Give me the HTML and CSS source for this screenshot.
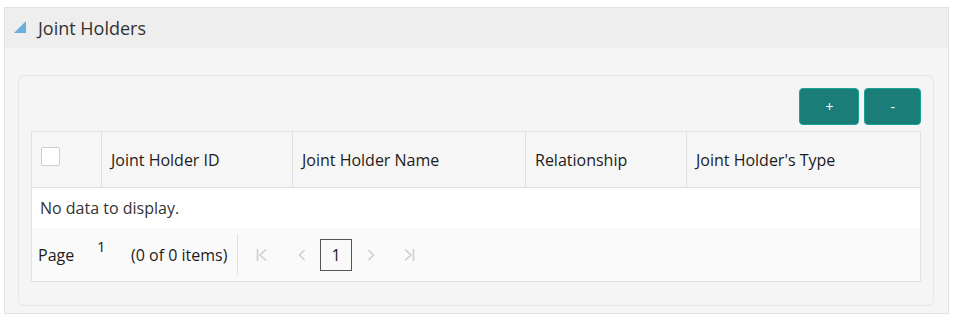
FILE: index.html
```html
<!DOCTYPE html>
<html>
<head>
<meta charset="utf-8">
<link rel="stylesheet" href="styles.css">
</head>
<body>
<section class="panel">
  <header class="panel-header">
    <svg class="tri" width="12" height="12" viewBox="0 0 12 12"><polygon points="12,0 12,12 0,12" fill="#6aaee0"/></svg>
    <span class="title">Joint Holders</span>
  </header>
  <div class="panel-body">
    <div class="card">
      <div class="toolbar">
        <button class="btn">+</button>
        <button class="btn">-</button>
      </div>
      <div class="grid">
        <div class="row head">
          <div class="cell c1"><span class="check"></span></div>
          <div class="cell c2">Joint Holder ID</div>
          <div class="cell c3">Joint Holder Name</div>
          <div class="cell c4">Relationship</div>
          <div class="cell c5">Joint Holder's Type</div>
        </div>
        <div class="empty">No data to display.</div>
        <div class="pager">
          <span class="plabel">Page</span>
          <span class="pinput">1</span>
          <span class="pcount">(0 of 0 items)</span>
          <span class="sep"></span>
          <span class="nav first"><svg width="12" height="14" viewBox="0 0 12 14"><path d="M1.5 1v12M10 1.5L4 7l6 5.5" fill="none" stroke="#cfcfcf" stroke-width="1.6"/></svg></span>
          <span class="nav prev"><svg width="8" height="14" viewBox="0 0 8 14"><path d="M6.5 2L1.5 7l5 5" fill="none" stroke="#cfcfcf" stroke-width="1.6"/></svg></span>
          <span class="pnum">1</span>
          <span class="nav next"><svg width="8" height="14" viewBox="0 0 8 14"><path d="M1.5 2l5 5-5 5" fill="none" stroke="#cfcfcf" stroke-width="1.6"/></svg></span>
          <span class="nav last"><svg width="12" height="14" viewBox="0 0 12 14"><path d="M10.5 1v12M2 1.5L8 7l-6 5.5" fill="none" stroke="#cfcfcf" stroke-width="1.6"/></svg></span>
        </div>
      </div>
    </div>
  </div>
</section>
</body>
</html>
```
FILE: styles.css
```css
* { box-sizing: border-box; }
body {
  margin: 0;
  padding: 7px 7px 0 4px;
  background: #ffffff;
  font-family: "Open Sans", "Noto Sans", sans-serif;
  font-size: 16px;
  color: #1d1c1a;
}
.panel {
  border: 1px solid #e2e2e2;
  background: #f5f5f5;
  height: 307px;
}
.panel-header {
  height: 40px;
  background: #eeeeee;
  display: flex;
  align-items: center;
  padding-left: 9px;
}
.tri { margin-right: 12px; margin-top: -2px; }
.title { font-size: 18px; color: #333; }
.panel-body {
  padding: 27px 14px 0 13px;
}
.card {
  border: 1px solid #e6e6e6;
  border-radius: 6px;
  background: #f5f5f5;
  padding: 12px 12px 23px 12px;
}
.toolbar {
  display: flex;
  justify-content: flex-end;
  gap: 5px;
  margin-bottom: 6px;
}
.btn {
  height: 37px;
  padding: 0 25px;
  background: #1b7d77;
  border: 1px solid #17a398;
  border-radius: 4px;
  color: #fff;
  font-family: inherit;
  font-size: 14px;
}
.grid {
  border: 1px solid #e0e0e0;
  background: #fff;
}
.row.head {
  display: flex;
  height: 56px;
  background: #f6f6f6;
  border-bottom: 1px solid #e0e0e0;
}
.cell {
  display: flex;
  align-items: center;
  padding-left: 9px;
  border-right: 1px solid #e0e0e0;
}
.c1 { width: 70px; }
.c2 { width: 191px; }
.c3 { width: 233px; }
.c4 { width: 161px; }
.c5 { flex: 1; border-right: none; }
.check {
  width: 19px;
  height: 19px;
  border: 1px solid #cfcfcf;
  border-radius: 2px;
  background: #fff;
  margin-top: -6px;
}
.empty {
  height: 40px;
  display: flex;
  align-items: center;
  padding-left: 8px;
  background: #fff;
  color: #333;
}
.pager {
  height: 53px;
  background: #fafafa;
  display: flex;
  align-items: center;
  padding-left: 6px;
}
.plabel { width: 59px; flex: none; }
.pinput { width: 34px; flex: none; margin-top: -18px; font-size: 15px; }
.pcount { width: 106px; flex: none; }
.sep { width: 1px; height: 41px; background: #e0e0e0; margin-right: 18px; flex: none; }
.nav { display: flex; align-items: center; }
.first { margin-right: 30px; }
.prev { margin-right: 14px; }
.pnum {
  width: 32px;
  height: 32px;
  border: 1px solid #555;
  display: flex;
  align-items: center;
  justify-content: center;
  margin-right: 15px;
  flex: none;
}
.next { margin-right: 28px; }
```
